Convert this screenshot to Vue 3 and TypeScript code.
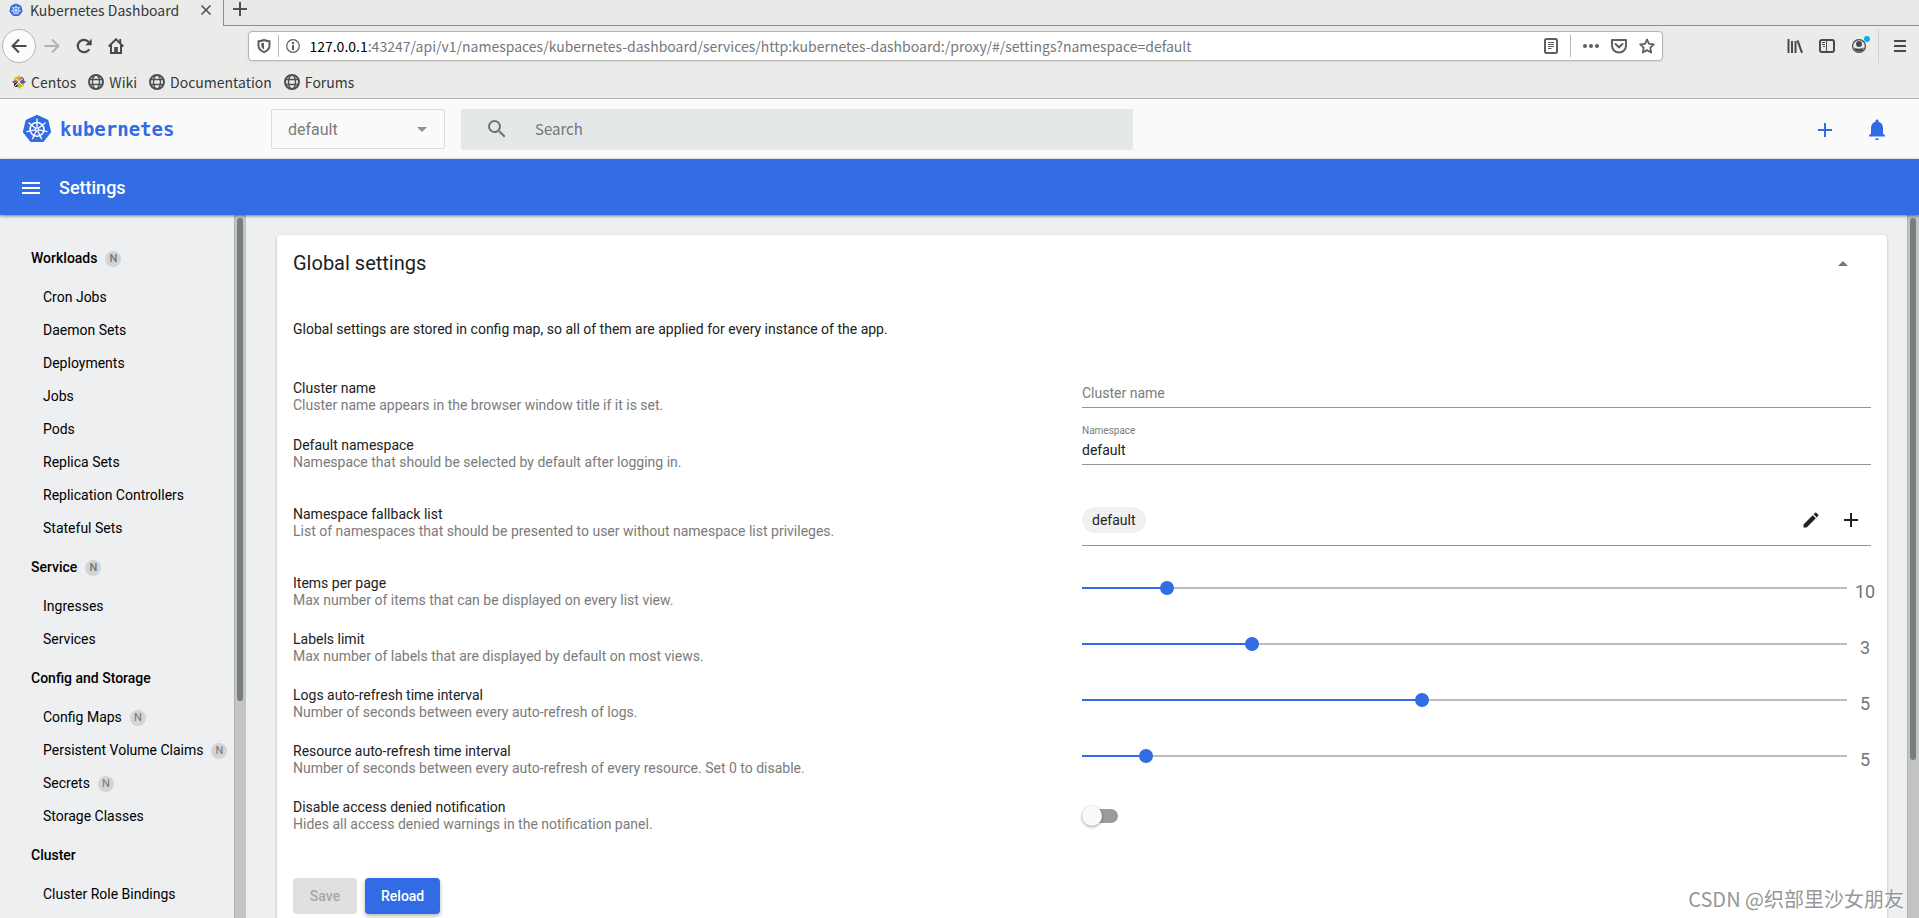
<script setup lang="ts">
import { computed, reactive, ref } from 'vue'

interface NavItem {
  name: string
  namespaced?: boolean
}

interface NavGroup extends NavItem {
  items: NavItem[]
}

interface SliderSetting {
  id: string
  title: string
  hint: string
  min: number
  max: number
  value: number
}

const bookmarks: string[] = ['Wiki', 'Documentation', 'Forums']

const groups: NavGroup[] = [
  {
    name: 'Workloads',
    namespaced: true,
    items: [
      { name: 'Cron Jobs' },
      { name: 'Daemon Sets' },
      { name: 'Deployments' },
      { name: 'Jobs' },
      { name: 'Pods' },
      { name: 'Replica Sets' },
      { name: 'Replication Controllers' },
      { name: 'Stateful Sets' },
    ],
  },
  {
    name: 'Service',
    namespaced: true,
    items: [{ name: 'Ingresses' }, { name: 'Services' }],
  },
  {
    name: 'Config and Storage',
    items: [
      { name: 'Config Maps', namespaced: true },
      { name: 'Persistent Volume Claims', namespaced: true },
      { name: 'Secrets', namespaced: true },
      { name: 'Storage Classes' },
    ],
  },
  {
    name: 'Cluster',
    items: [{ name: 'Cluster Role Bindings' }],
  },
]

const sliders = reactive<SliderSetting[]>([
  {
    id: 'items-per-page',
    title: 'Items per page',
    hint: 'Max number of items that can be displayed on every list view.',
    min: 5,
    max: 50,
    value: 10,
  },
  {
    id: 'labels-limit',
    title: 'Labels limit',
    hint: 'Max number of labels that are displayed by default on most views.',
    min: 1,
    max: 10,
    value: 3,
  },
  {
    id: 'logs-interval',
    title: 'Logs auto-refresh time interval',
    hint: 'Number of seconds between every auto-refresh of logs.',
    min: 1,
    max: 10,
    value: 5,
  },
  {
    id: 'resource-interval',
    title: 'Resource auto-refresh time interval',
    hint: 'Number of seconds between every auto-refresh of every resource. Set 0 to disable.',
    min: 0,
    max: 60,
    value: 5,
  },
])

const namespace = ref('default')
const defaultNamespace = ref('default')
const clusterName = ref('')
const query = ref('')
const hideDenied = ref(false)

const fills = computed(() =>
  sliders.map((s) => `${((s.value - s.min) / (s.max - s.min)) * 100}%`),
)

const spokes: number[] = Array.from({ length: 7 }, (_, i) => (i * 360) / 7)
</script>

<template>
  <div class="window">
    <svg class="defs" aria-hidden="true">
      <symbol id="k8s" viewBox="0 0 32 32">
        <path
          fill="#326ce5"
          stroke="#326ce5"
          stroke-width="3"
          stroke-linejoin="round"
          d="M16 2.4 26.8 7.5 29.5 19 22.1 28.4H9.9L2.5 19 5.2 7.5z"
        />
        <circle cx="16" cy="16.4" r="7.4" fill="none" stroke="#fff" stroke-width="1.7" />
        <g stroke="#fff" stroke-width="1.4" stroke-linecap="round">
          <path
            v-for="angle in spokes"
            :key="angle"
            d="M16 14.4V5.4"
            :transform="`rotate(${angle} 16 16.4)`"
          />
        </g>
        <circle cx="16" cy="16.4" r="2.2" fill="#fff" />
        <circle cx="16" cy="16.4" r="1" fill="#326ce5" />
      </symbol>
    </svg>

    <div class="browser">
      <div class="tabs">
        <div class="tab">
          <svg class="favicon"><use href="#k8s" /></svg>
          <span class="tab-title">Kubernetes Dashboard</span>
          <button class="plain" aria-label="Close tab">
            <svg width="12" height="12" viewBox="0 0 12 12">
              <path d="M1.5 1.5l9 9m0-9l-9 9" stroke="#4c5153" stroke-width="1.6" />
            </svg>
          </button>
        </div>
        <div class="tab-rest">
          <button class="plain" aria-label="New tab">
            <svg width="14" height="14" viewBox="0 0 14 14">
              <path d="M7 0v14M0 7h14" stroke="#4c5153" stroke-width="2" />
            </svg>
          </button>
        </div>
      </div>

      <div class="toolbar">
        <button class="plain back" aria-label="Back">
          <svg width="16" height="16" viewBox="0 0 16 16">
            <path d="M8 1.5L1.5 8 8 14.5M1.5 8h14" fill="none" stroke="#464b4d" stroke-width="2" />
          </svg>
        </button>
        <button class="plain tool" aria-label="Forward" disabled>
          <svg width="16" height="16" viewBox="0 0 16 16">
            <path d="M8 1.5L14.5 8 8 14.5M14.5 8H.5" fill="none" stroke="#b1b3b2" stroke-width="2" />
          </svg>
        </button>
        <button class="plain tool" aria-label="Reload page">
          <svg width="16" height="16" viewBox="0 0 16 16">
            <path d="M13.3 11.2A6.2 6.2 0 1 1 12.7 4" fill="none" stroke="#464b4d" stroke-width="2.2" />
            <path d="M15.7.7v6.5H9.2z" fill="#464b4d" />
          </svg>
        </button>
        <button class="plain tool" aria-label="Home">
          <svg width="16" height="16" viewBox="0 0 16 16">
            <path d="M.7 8.5L8 1.3l7.3 7.2" fill="none" stroke="#464b4d" stroke-width="2" />
            <path d="M3 7v8h10V7M12.2 1v4" fill="none" stroke="#464b4d" stroke-width="2" />
            <path d="M6.2 15V9h3.6v6z" fill="#464b4d" />
          </svg>
        </button>
        <div class="spring"></div>

        <div class="url">
          <svg width="14" height="14" viewBox="0 0 14 14">
            <path d="M7 1C5 2 3 2.2 1.5 2.2v4.3c0 3.5 2.5 5.5 5.5 6.700 3-1.200 5.500-3.200 5.500-6.700V2.2C11 2.2 9 2 7 1z" fill="none" stroke="#5d5f60" stroke-width="2" />
            <path d="M7 3.8v6.6C5.3 9.5 4.3 8.5 4.3 6.5V4.3z" fill="#5d5f60" />
          </svg>
          <span class="bar"></span>
          <svg width="14" height="14" viewBox="0 0 14 14">
            <circle cx="7" cy="7" r="6.3" fill="none" stroke="#5d5f60" stroke-width="1.2" />
            <path d="M7 6v5M7 3v2" stroke="#5d5f60" stroke-width="2" />
          </svg>
          <span class="address"><b>127.0.0.1</b>:43247/api/v1/namespaces/kubernetes-dashboard/services/http:kubernetes-dashboard:/proxy/#/settings?namespace=default</span>
          <button class="plain" aria-label="Reader view">
            <svg width="14" height="16" viewBox="0 0 14 16">
              <rect x="1" y="1" width="12" height="14" rx="1.5" fill="none" stroke="#5d5f60" stroke-width="2" />
              <path d="M4 4.5h6M4 6.5h6M4 8.5h6M4 10.5h3.5" stroke="#5d5f60" />
            </svg>
          </button>
          <span class="bar wide"></span>
          <button class="plain" aria-label="Page actions">
            <svg width="16" height="16" viewBox="0 0 16 16" fill="#5d5f60">
              <circle cx="2" cy="8" r="2" /><circle cx="8" cy="8" r="2" /><circle cx="14" cy="8" r="2" />
            </svg>
          </button>
          <button class="plain" aria-label="Save to Pocket">
            <svg width="16" height="16" viewBox="0 0 16 16" fill="none" stroke="#5d5f60" stroke-width="2">
              <path d="M1 2h14v5.5a7 7 0 0 1-14 0z" stroke-linejoin="round" />
              <path d="M4.5 6L8 9.3 11.5 6" stroke-linecap="round" />
            </svg>
          </button>
          <button class="plain" aria-label="Bookmark this page">
            <svg width="16" height="16" viewBox="0 0 16 16">
              <path d="M8 1.5l2 4.3 4.8.6-3.5 3.2.9 4.9L8 12.1l-4.2 2.4.9-4.9L1.2 6.4 6 5.8z" fill="none" stroke="#5d5f60" stroke-width="1.8" stroke-linejoin="round" />
            </svg>
          </button>
        </div>

        <div class="spring"></div>
        <button class="plain tool" aria-label="Library">
          <svg width="16" height="16" viewBox="0 0 16 16">
            <path d="M1.5 1v14M5 3v12M8.5 3v12M10.5 2.3L15 14.8" fill="none" stroke="#464b4d" stroke-width="2" />
          </svg>
        </button>
        <button class="plain tool" aria-label="Sidebars">
          <svg width="16" height="16" viewBox="0 0 16 16" fill="none" stroke="#464b4d">
            <rect x="1" y="2" width="14" height="12" rx="2" stroke-width="2" />
            <path d="M7.5 2v12M3 4.500h3M3 6.500h3M4 8.500h2" />
          </svg>
        </button>
        <button class="plain tool" aria-label="Account">
          <svg class="account" width="22" height="16" viewBox="0 0 22 16">
            <circle cx="11" cy="8" r="6.4" fill="none" stroke="#464b4d" stroke-width="1.3" />
            <circle cx="11" cy="6" r="3" fill="#464b4d" />
            <path d="M6.5 9.5c2 1.6 7 1.6 9 0 .3 2.5-2 4-4.500 4s-4.800-1.500-4.500-4z" fill="#464b4d" />
            <circle cx="19" cy="1" r="3" fill="#00b3f4" />
          </svg>
        </button>
        <span class="tool-divider"></span>
        <button class="plain tool" aria-label="Open menu">
          <svg width="12" height="12" viewBox="0 0 12 12">
            <path d="M0 1h12M0 6h12M0 11h12" stroke="#464b4d" stroke-width="2" />
          </svg>
        </button>
      </div>

      <div class="bookmarks">
        <a href="#" class="bookmark">
          <svg width="14" height="14" viewBox="0 0 14 14">
            <path d="M2 2h4v4H2z" fill="#9ccd2a" />
            <path d="M8 2h4v4H8z" fill="#a14f8c" />
            <path d="M2 8h4v4H2z" fill="#262577" />
            <path d="M8 8h4v4H8z" fill="#efa724" />
            <path d="M7 0l1.6 2v3.500L7 6.500 5.400 5.500V2z" fill="#efa724" />
            <path d="M7 14l1.600-2V8.500L7 7.500 5.400 8.500V12z" fill="#9ccd2a" />
            <path d="M0 7l2-1.600h3.500L6.500 7l-1 1.600H2z" fill="#a14f8c" />
            <path d="M14 7l-2-1.600H8.500L7.500 7l1 1.600H12z" fill="#5a5a9c" />
            <path d="M2 2l10 10M12 2L2 12" stroke="#ebebea" />
          </svg>
          Centos
        </a>
        <a v-for="name in bookmarks" :key="name" href="#" class="bookmark">
          <svg width="16" height="16" viewBox="0 0 16 16" fill="none" stroke="#4c5153">
            <circle cx="8" cy="8" r="7" stroke-width="2" />
            <ellipse cx="8" cy="8" rx="3.5" ry="7" stroke-width="1.4" />
            <path d="M1.5 5.5h13M1.5 10.5h13" stroke-width="1.4" />
          </svg>
          {{ name }}
        </a>
      </div>
    </div>

    <header class="app-header">
      <a href="#" class="brand">
        <svg class="logo"><use href="#k8s" /></svg>
        <span>kubernetes</span>
      </a>
      <div class="ns-box">
        <select v-model="namespace" aria-label="Namespace">
          <option>default</option>
        </select>
        <span class="caret"></span>
      </div>
      <label class="search">
        <svg width="24" height="24" viewBox="0 0 24 24" fill="#6f7172">
          <path d="M15.5 14h-.79l-.28-.27A6.471 6.471 0 0 0 16 9.5 6.5 6.5 0 1 0 9.5 16c1.61 0 3.09-.59 4.23-1.57l.27.28v.79l5 4.99L20.49 19l-4.99-5zm-6 0C7.01 14 5 11.99 5 9.5S7.01 5 9.5 5 14 7.01 14 9.5 11.99 14 9.5 14z" />
        </svg>
        <input v-model="query" type="search" placeholder="Search" aria-label="Search" />
      </label>
      <div class="actions">
        <button class="plain" aria-label="Create new resource">
          <svg width="24" height="24" viewBox="0 0 24 24" fill="#326ce5">
            <path d="M19 13h-6v6h-2v-6H5v-2h6V5h2v6h6v2z" />
          </svg>
        </button>
        <button class="plain" aria-label="Notifications">
          <svg width="24" height="24" viewBox="0 0 24 24" fill="#326ce5">
            <path d="M12 22c1.1 0 2-.5 2-1.5h-4c0 1 .9 1.5 2 1.5zM20 18.5v-1l-2-2V10c0-3.07-1.64-5.64-4.5-6.32V3c0-.83-.67-1.5-1.5-1.5s-1.5.67-1.5 1.5v.68C7.63 4.36 6 6.92 6 10v5.5l-2 2v1z" />
          </svg>
        </button>
      </div>
    </header>

    <div class="title-bar">
      <button class="plain" aria-label="Toggle navigation">
        <svg width="18" height="12" viewBox="0 0 18 12">
          <path d="M0 1h18M0 6h18M0 11h18" stroke="#fff" stroke-width="2" />
        </svg>
      </button>
      <h1>Settings</h1>
    </div>

    <div class="body">
      <nav class="sidebar">
        <div class="nav-scroll">
          <template v-for="group in groups" :key="group.name">
            <a href="#" class="nav-group">
              {{ group.name }}<span v-if="group.namespaced" class="badge">N</span>
            </a>
            <a v-for="item in group.items" :key="item.name" href="#" class="nav-item">
              {{ item.name }}<span v-if="item.namespaced" class="badge">N</span>
            </a>
          </template>
        </div>
        <div class="scrollbar"><div class="thumb nav-thumb"></div></div>
      </nav>

      <main class="content">
        <section class="card">
          <div class="card-head">
            <h2>Global settings</h2>
            <button class="plain" aria-label="Collapse">
              <svg width="10" height="5" viewBox="0 0 10 5"><path d="M0 5l5-5 5 5z" fill="#757575" /></svg>
            </button>
          </div>
          <p class="intro">
            Global settings are stored in config map, so all of them are applied for every instance of the app.
          </p>

          <div class="row field-row">
            <div class="text">
              <div class="name">Cluster name</div>
              <div class="hint">Cluster name appears in the browser window title if it is set.</div>
            </div>
            <div class="field">
              <input v-model="clusterName" type="text" placeholder="Cluster name" aria-label="Cluster name" />
            </div>
          </div>

          <div class="row tall-row">
            <div class="text">
              <div class="name">Default namespace</div>
              <div class="hint">Namespace that should be selected by default after logging in.</div>
            </div>
            <div class="field">
              <label class="floating" for="default-ns">Namespace</label>
              <select id="default-ns" v-model="defaultNamespace">
                <option>default</option>
              </select>
            </div>
          </div>

          <div class="row tall-row">
            <div class="text">
              <div class="name">Namespace fallback list</div>
              <div class="hint">List of namespaces that should be presented to user without namespace list privileges.</div>
            </div>
            <div class="chips">
              <span class="chip">default</span>
              <button class="plain icon" aria-label="Edit list">
                <svg width="20" height="20" viewBox="0 0 24 24" fill="#212121">
                  <path d="M3 17.25V21h3.75L17.81 9.94l-3.75-3.75L3 17.25zM20.71 7.04a1 1 0 0 0 0-1.41l-2.34-2.34a1 1 0 0 0-1.41 0l-1.83 1.83 3.75 3.75 1.83-1.83z" />
                </svg>
              </button>
              <button class="plain icon" aria-label="Add namespace">
                <svg width="24" height="24" viewBox="0 0 24 24" fill="#212121">
                  <path d="M19 13h-6v6h-2v-6H5v-2h6V5h2v6h6v2z" />
                </svg>
              </button>
            </div>
          </div>

          <div v-for="(s, i) in sliders" :key="s.id" class="row">
            <div class="text">
              <label class="name" :for="s.id">{{ s.title }}</label>
              <div class="hint">{{ s.hint }}</div>
            </div>
            <div class="slider-cell">
              <div class="slider" :style="{ '--fill': fills[i] }">
                <input :id="s.id" v-model.number="s.value" type="range" :min="s.min" :max="s.max" />
              </div>
              <output :for="s.id">{{ s.value }}</output>
            </div>
          </div>

          <div class="row">
            <div class="text">
              <label class="name" for="hide-denied">Disable access denied notification</label>
              <div class="hint">Hides all access denied warnings in the notification panel.</div>
            </div>
            <div class="toggle-cell">
              <input id="hide-denied" v-model="hideDenied" class="toggle" type="checkbox" role="switch" />
            </div>
          </div>

          <div class="buttons">
            <button class="btn" disabled>Save</button>
            <button class="btn primary">Reload</button>
          </div>
        </section>
      </main>
      <div class="scrollbar"><div class="thumb main-thumb"></div></div>
    </div>

    <div class="watermark">CSDN @织部里沙女朋友</div>
  </div>
</template>

<style>
body {
  margin: 0;
  overflow: hidden;
}
</style>

<style scoped>
* {
  box-sizing: border-box;
}

.window {
  position: relative;
  display: flex;
  flex-direction: column;
  height: 100vh;
  overflow: hidden;
  font: 14px/17px Roboto, sans-serif;
  color: #212121;
  background: #eeeff1;
}

.defs {
  position: absolute;
  width: 0;
  height: 0;
}

svg {
  display: block;
  flex: none;
}

a {
  color: inherit;
  text-decoration: none;
}

button,
input,
select {
  font: inherit;
  color: inherit;
}

.plain {
  display: flex;
  align-items: center;
  justify-content: center;
  flex: none;
  padding: 0;
  border: 0;
  background: none;
}

/* Browser chrome */
.browser {
  flex: none;
  font: 14px/20px "Noto Sans CJK SC", sans-serif;
  color: #34393b;
  background: #ebebea;
  border-bottom: 1px solid #b4b4b3;
}

.tabs {
  display: flex;
  height: 26px;
}

.tab {
  display: flex;
  align-items: center;
  width: 223px;
  padding: 0 11px 6px 9px;
}

.favicon {
  width: 14px;
  height: 14px;
  margin-right: 7px;
}

.tab-title {
  flex: 1;
}

.tab-rest {
  display: flex;
  align-items: center;
  flex: 1;
  padding: 0 9px 7px;
  background: #e8e8e6;
  border-left: 1px solid #8e8f8f;
  border-bottom: 1px solid #8e8f8f;
}

.toolbar {
  display: flex;
  align-items: center;
  height: 40px;
  padding: 0 3px 0 2px;
}

.back {
  width: 34px;
  height: 34px;
  border: 1px solid #b4b4b3;
  border-radius: 50%;
  background: #fcfcfc;
}

.tool {
  width: 32px;
  height: 32px;
}

.account {
  margin: 0 -3px;
  overflow: visible;
}

.spring {
  flex: 1;
}

.tool-divider {
  width: 1px;
  height: 34px;
  margin: 0 5px 0 3px;
  background: #d0d0cf;
}

.url {
  display: flex;
  align-items: center;
  gap: 12px;
  flex: 12;
  min-width: 0;
  height: 30px;
  padding: 0 7px 0 8px;
  background: #fff;
  border: 1px solid #b4b4b3;
  border-radius: 4px;
  box-shadow: 0 1px 3px rgba(0, 0, 0, 0.08);
}

.url .bar {
  width: 1px;
  height: 22px;
  margin: 0 -5px;
  background: #b9b9b9;
}

.url .bar.wide {
  margin: 0;
}

.address {
  flex: 1;
  min-width: 0;
  overflow: hidden;
  white-space: nowrap;
  margin-left: -3px;
  color: #75787a;
}

.address b {
  font-weight: 400;
  color: #000;
}

.bookmarks {
  display: flex;
  align-items: center;
  gap: 12px;
  height: 32px;
  padding-left: 12px;
}

.bookmark {
  display: flex;
  align-items: center;
  gap: 5px;
}

/* Dashboard header */
.app-header {
  display: flex;
  align-items: center;
  flex: none;
  height: 60px;
  padding: 0 30px 0 22px;
  background: #fafafa;
}

.brand {
  display: flex;
  align-items: center;
  gap: 8px;
  width: 249px;
  font: bold 19px/24px "DejaVu Sans Mono", monospace;
  color: #326ce5;
}

.logo {
  width: 30px;
  height: 30px;
}

.ns-box {
  display: flex;
  align-items: center;
  width: 174px;
  height: 40px;
  padding: 0 17px 0 16px;
  font-size: 16px;
  color: #7b7b7b;
  border: 1px solid #dcdcdc;
  border-radius: 2px;
}

.ns-box select {
  flex: 1;
  min-width: 0;
}

select {
  appearance: none;
  padding: 0;
  border: 0;
  background: none;
}

.caret {
  border: 5px solid transparent;
  border-top-color: #919191;
  border-bottom: 0;
}

.search {
  display: flex;
  align-items: center;
  gap: 26px;
  width: 36%;
  height: 41px;
  margin-left: 16px;
  padding: 0 24px;
  color: #757575;
  background: #e4e8e9;
  border-radius: 2px;
}

.search input {
  flex: 1;
  min-width: 0;
  padding: 0;
  border: 0;
  outline: 0;
  background: none;
  font: 15px/20px "Noto Sans CJK SC", sans-serif;
}

.search input::placeholder {
  color: #757575;
  opacity: 1;
}

.actions {
  display: flex;
  gap: 28px;
  margin-left: auto;
  padding-top: 2px;
}

.title-bar {
  position: relative;
  display: flex;
  align-items: center;
  gap: 19px;
  flex: none;
  height: 56px;
  padding: 2px 22px 0;
  color: #fff;
  background: #326de6;
  box-shadow: 0 1px 3px rgba(0, 0, 0, 0.5);
}

h1 {
  margin: 0;
  font-size: 18px;
  line-height: 24px;
  font-weight: 500;
}

/* Navigation */
.body {
  display: flex;
  flex: 1;
  min-height: 0;
}

.sidebar {
  display: flex;
  flex: none;
  width: 246px;
  color: #000;
}

.nav-scroll {
  flex: 1;
  padding: 21px 0 0 31px;
  overflow: hidden;
  white-space: nowrap;
}

.nav-group,
.nav-item {
  display: flex;
  align-items: center;
  height: 33px;
}

.nav-group {
  height: 45px;
  font-weight: 500;
}

.nav-item {
  padding-left: 12px;
}

.badge {
  width: 16px;
  height: 16px;
  margin-left: 8px;
  border-radius: 50%;
  background: #d3d4d6;
  color: #747474;
  font-size: 11px;
  line-height: 16px;
  text-align: center;
}

.scrollbar {
  flex: none;
  width: 12px;
  padding: 3px 3px 0 2px;
  background: #c3c5c4;
  border-left: 1px solid #b0b2b1;
}

.thumb {
  width: 6px;
  border-radius: 3px;
  background: #797d7e;
}

.nav-thumb {
  height: 69%;
}

.main-thumb {
  height: calc(77% + 3px);
}

/* Settings card */
.content {
  flex: 1;
  min-width: 0;
  padding: 20px 20px 0 31px;
  overflow: hidden;
}

.card {
  padding: 0 16px 24px;
  background: #fff;
  border-radius: 4px;
  box-shadow: 0 1px 3px rgba(0, 0, 0, 0.25);
}

.card-head {
  display: flex;
  align-items: center;
  justify-content: space-between;
  height: 56px;
  padding-right: 23px;
}

h2 {
  margin: 0;
  font-size: 20px;
  line-height: 24px;
  font-weight: 400;
}

.intro {
  margin: 30px 0 41px;
}

.row {
  display: grid;
  grid-template-columns: 1fr 1fr;
  align-items: start;
  min-height: 56px;
}

.field-row {
  min-height: 57px;
}

.tall-row {
  min-height: 69px;
}

.text {
  padding-top: 1px;
}

.name {
  display: block;
}

.hint {
  color: #7b7b7b;
}

.field {
  position: relative;
  height: 29px;
  border-bottom: 1px solid #949494;
}

.field input,
.field select {
  display: block;
  width: 100%;
  height: 28px;
  padding: 0;
  border: 0;
  outline: 0;
  background: none;
}

.field input::placeholder {
  color: #7b7b7b;
  opacity: 1;
}

.floating {
  position: absolute;
  top: -11px;
  left: 0;
  font-size: 10px;
  line-height: 12px;
  color: #7b7b7b;
}

.chips {
  display: flex;
  align-items: center;
  gap: 16px;
  height: 41px;
  padding: 0 8px 10px 0;
  border-bottom: 1px solid #949494;
}

.chip {
  margin-right: auto;
  padding: 0 10px;
  line-height: 26px;
  border-radius: 13px;
  background: #f1f1f1;
}

.icon {
  width: 24px;
  height: 24px;
}

.slider-cell {
  display: flex;
  align-items: center;
  height: 34px;
  margin-right: -6px;
}

.slider {
  flex: 1;
  height: 14px;
  margin-bottom: 6px;
  background: linear-gradient(to right, #326ce5 var(--fill), #bdbdbd var(--fill)) center / 100% 2px no-repeat;
}

.slider input {
  appearance: none;
  display: block;
  width: calc(100% + 14px);
  height: 14px;
  margin: 0 -7px;
  background: none;
  outline: 0;
}

.slider input::-webkit-slider-thumb {
  appearance: none;
  width: 14px;
  height: 14px;
  border: 0;
  border-radius: 50%;
  background: #326ce5;
}

output {
  width: 30px;
  padding: 2px 0 0 6px;
  font-size: 18px;
  line-height: 24px;
  text-align: center;
  color: #757575;
}

.toggle-cell {
  display: flex;
  align-items: center;
  height: 36px;
}

.toggle {
  appearance: none;
  display: flex;
  align-items: center;
  width: 36px;
  height: 14px;
  margin: 0;
  border-radius: 7px;
  background: #9b9b9b;
}

.toggle::before {
  content: "";
  width: 20px;
  height: 20px;
  flex: none;
  border-radius: 50%;
  background: #fafafa;
  box-shadow: 0 1px 3px rgba(0, 0, 0, 0.4);
}

.toggle:checked {
  justify-content: flex-end;
  background: #98b5f2;
}

.buttons {
  display: flex;
  gap: 8px;
  margin-top: 24px;
}

.btn {
  min-width: 64px;
  height: 36px;
  padding: 0 16px;
  border: 0;
  border-radius: 4px;
  font-weight: 500;
  color: #a6a6a6;
  background: #e0e0e0;
}

.btn.primary {
  color: #fff;
  background: #326ce5;
  box-shadow: 0 2px 4px rgba(0, 0, 0, 0.3);
}

.watermark {
  position: absolute;
  right: 15px;
  bottom: 6px;
  font: 20px/26px "Noto Sans CJK SC", sans-serif;
  color: #979797;
  text-shadow: 1px 1px 0 #fff;
}
</style>
